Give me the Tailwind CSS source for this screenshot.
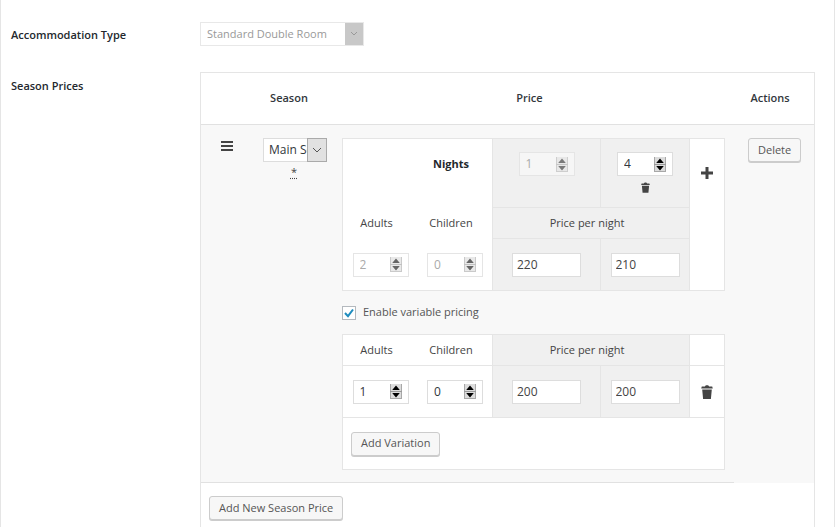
<!DOCTYPE html>
<html lang="en">
<head>
  <meta charset="UTF-8"/>
  <meta name="viewport" content="width=device-width, initial-scale=1.0"/>
  <title>Season Prices</title>
  <script src="https://cdn.jsdelivr.net/npm/@tailwindcss/browser@4"></script>
</head>
<body class="bg-white font-['Open_Sans',sans-serif] text-[11px] text-[#444]">

<!-- Shared icons -->
<svg class="hidden">
  <symbol id="spinner" viewBox="0 0 12 15">
    <rect width="12" height="15" fill="#dcdcdc"/>
    <path d="M.5 0v15M11.5 0v15M0 14.5h12" stroke="#a8a8a8" fill="none"/>
    <path d="M0 7.5h12" stroke="#999"/>
    <path d="M6 1.5l3.8 4.5h-7.6zM6 13.5l3.8-4.5h-7.6z" fill="currentColor"/>
  </symbol>
  <symbol id="trash" viewBox="0 0 12 14">
    <path d="M4 1.6C4 .7 5 .3 6 .3s2 .4 2 1.3h3.2l.6 2H.2l.6-2zM1.2 4.6h9.6L9.9 14H2.1z" fill="currentColor"/>
  </symbol>
</svg>

<div class="min-h-screen border-x border-[#e5e5e5] pl-[10px] pr-[19px] pt-[22px]">

  <!-- Accommodation Type -->
  <div class="flex">
    <label for="roomType" class="w-[189px] shrink-0 pt-[5px] font-semibold leading-4 text-[#23282d]">Accommodation Type</label>
    <div class="flex h-6 w-[164px] border border-[#e8e8e8]">
      <select id="roomType" disabled class="min-w-0 flex-1 appearance-none pl-1.5 text-[#999]">
        <option>Standard Double Room</option>
      </select>
      <span class="flex w-[18px] items-center justify-center bg-[#c8c8c8]">
        <svg class="h-2 w-2" viewBox="0 0 8 8"><path d="M1 2l3 3 3-3" fill="none" stroke="#999"/></svg>
      </span>
    </div>
  </div>

  <!-- Season Prices -->
  <div class="mt-[26px] flex">
    <h2 class="w-[189px] shrink-0 pt-1.5 font-semibold leading-4 text-[#23282d]">Season Prices</h2>

    <div class="min-w-0 flex-1 border-x border-t border-[#e5e5e5]">
      <table class="w-full table-fixed border-separate border-spacing-0">
        <colgroup>
          <col class="w-[52px]"/>
          <col class="w-[80px]"/>
          <col/>
          <col class="w-[80px]"/>
        </colgroup>
        <thead>
          <tr class="h-[52px]">
            <td class="border-b border-[#e1e1e1]"></td>
            <th class="border-b border-[#e1e1e1] pr-2 font-semibold text-[#32373c]">Season</th>
            <th class="border-b border-[#e1e1e1] pr-2 font-semibold text-[#32373c]">Price</th>
            <th class="border-b border-[#e1e1e1] pr-2 font-semibold text-[#32373c]">Actions</th>
          </tr>
        </thead>
        <tbody>
          <tr class="bg-[#f8f8f8] align-top">
            <td class="border-b border-[#e1e1e1] pt-[15px]">
              <button aria-label="Move" class="mx-auto block">
                <svg class="h-3 w-3" viewBox="0 0 12 12"><path d="M0 2h12M0 6h12M0 10h12" stroke="#444" stroke-width="2"/></svg>
              </button>
            </td>
            <td class="border-b border-[#e1e1e1] pl-[10px] pt-[13px]">
              <div class="flex h-6 w-16 border border-[#ddd] bg-white">
                <select id="season" aria-label="Season" class="min-w-0 flex-1 appearance-none pl-[5px] text-xs text-[#32373c]">
                  <option>Main Season</option>
                </select>
                <span class="-m-px flex w-5 items-center justify-center border border-[#aaa] bg-[#e1e1e1]">
                  <svg class="h-2 w-2" viewBox="0 0 8 8"><path d="M0 2l4 4 4-4" fill="none" stroke="#555"/></svg>
                </span>
              </div>
              <abbr title="required" class="block w-[62px] text-center leading-5 underline decoration-dotted underline-offset-2">*</abbr>
            </td>
            <td class="border-b border-[#e1e1e1] px-[9px] pb-3 pt-[13px]">

              <!-- Base prices -->
              <div class="border border-[#e5e5e5] bg-white">
                <table class="w-full table-fixed border-separate border-spacing-0">
                  <colgroup>
                    <col class="w-[75px]"/>
                    <col class="w-[74px]"/>
                    <col class="w-[108px]"/>
                    <col/>
                    <col class="w-[35px]"/>
                  </colgroup>
                  <tbody>
                    <tr class="h-[69px] align-top">
                      <td></td>
                      <th class="pr-2 pt-[17px] font-bold text-[#23282d]">Nights</th>
                      <td class="border-b border-l border-[#e5e5e5] bg-[#f0f0f0] pt-[13px]">
                        <div class="mx-auto flex h-6 w-14 items-center border border-[#e5e5e5] bg-[#f6f6f6] px-1.5">
                          <input type="number" value="1" disabled aria-label="Nights, period 1" class="min-w-0 flex-1 text-xs text-[#aaa] [&::-webkit-inner-spin-button]:appearance-none"/>
                          <svg class="h-[15px] w-3 text-black opacity-50"><use href="#spinner"/></svg>
                        </div>
                      </td>
                      <td class="border-b border-l border-[#e5e5e5] bg-[#f0f0f0] pt-[13px]">
                        <div class="mx-auto flex h-6 w-14 items-center border border-[#ddd] bg-white px-1.5">
                          <input type="number" value="4" aria-label="Nights, period 2" class="min-w-0 flex-1 text-xs text-[#32373c] [&::-webkit-inner-spin-button]:appearance-none"/>
                          <svg class="h-[15px] w-3 text-black"><use href="#spinner"/></svg>
                        </div>
                        <button aria-label="Remove period" class="mx-auto mt-1.5 block">
                          <svg class="h-[11px] w-[9px] text-[#444]"><use href="#trash"/></svg>
                        </button>
                      </td>
                      <td rowspan="3" class="border-l border-[#e5e5e5] pt-7">
                        <button aria-label="Add period" class="mx-auto block">
                          <svg class="h-3 w-3" viewBox="0 0 12 12"><path d="M6 0v12M0 6h12" stroke="#444" stroke-width="3"/></svg>
                        </button>
                      </td>
                    </tr>
                    <tr class="h-[31px]">
                      <th class="pr-2 font-normal">Adults</th>
                      <th class="pr-2 font-normal">Children</th>
                      <th colspan="2" class="border-b border-l border-[#e5e5e5] bg-[#f0f0f0] pr-2 font-normal">Price per night</th>
                    </tr>
                    <tr class="h-[51px]">
                      <td>
                        <div class="mx-auto flex h-6 w-14 items-center border border-[#e5e5e5] bg-white px-1.5">
                          <input type="number" value="2" disabled aria-label="Adults" class="min-w-0 flex-1 text-xs text-[#aaa] [&::-webkit-inner-spin-button]:appearance-none"/>
                          <svg class="h-[15px] w-3 text-black opacity-60"><use href="#spinner"/></svg>
                        </div>
                      </td>
                      <td>
                        <div class="mx-auto flex h-6 w-14 items-center border border-[#e5e5e5] bg-white px-1.5">
                          <input type="number" value="0" disabled aria-label="Children" class="min-w-0 flex-1 text-xs text-[#aaa] [&::-webkit-inner-spin-button]:appearance-none"/>
                          <svg class="h-[15px] w-3 text-black opacity-60"><use href="#spinner"/></svg>
                        </div>
                      </td>
                      <td class="border-l border-[#e5e5e5] bg-[#f0f0f0]">
                        <input type="text" value="220" aria-label="Price, period 1" class="mx-auto block h-6 w-[69px] border border-[#ddd] bg-white px-1 text-xs"/>
                      </td>
                      <td class="border-l border-[#e5e5e5] bg-[#f0f0f0]">
                        <input type="text" value="210" aria-label="Price, period 2" class="mx-auto block h-6 w-[69px] border border-[#ddd] bg-white px-1 text-xs"/>
                      </td>
                    </tr>
                  </tbody>
                </table>
              </div>

              <div class="flex h-[43px] items-center">
                <div class="grid">
                  <input id="variable" type="checkbox" checked class="col-start-1 row-start-1 h-[14px] w-[14px] appearance-none border border-[#b4b9be] bg-white"/>
                  <svg class="pointer-events-none col-start-1 row-start-1 h-[14px] w-[14px]" viewBox="0 0 14 14"><path d="M3 7l3 3.2L11 3.5" fill="none" stroke="#1e8cbe" stroke-width="2"/></svg>
                </div>
                <label for="variable" class="pl-[7px] text-[#555]">Enable variable pricing</label>
              </div>

              <!-- Variations -->
              <div class="border border-[#e5e5e5] bg-white">
                <table class="w-full table-fixed border-separate border-spacing-0">
                  <colgroup>
                    <col class="w-[75px]"/>
                    <col class="w-[74px]"/>
                    <col class="w-[108px]"/>
                    <col/>
                    <col class="w-[35px]"/>
                  </colgroup>
                  <thead>
                    <tr class="h-[31px]">
                      <th class="border-b border-[#e5e5e5] pr-2 font-normal">Adults</th>
                      <th class="border-b border-[#e5e5e5] pr-2 font-normal">Children</th>
                      <th colspan="2" class="border-b border-l border-[#e5e5e5] bg-[#f0f0f0] pr-2 font-normal">Price per night</th>
                      <td class="border-b border-l border-[#e5e5e5]"></td>
                    </tr>
                  </thead>
                  <tbody>
                    <tr class="h-[52px]">
                      <td class="border-b border-[#e5e5e5]">
                        <div class="mx-auto flex h-6 w-14 items-center border border-[#ddd] bg-white px-1.5">
                          <input type="number" value="1" aria-label="Adults, variation 1" class="min-w-0 flex-1 text-xs text-[#32373c] [&::-webkit-inner-spin-button]:appearance-none"/>
                          <svg class="h-[15px] w-3 text-black"><use href="#spinner"/></svg>
                        </div>
                      </td>
                      <td class="border-b border-[#e5e5e5]">
                        <div class="mx-auto flex h-6 w-14 items-center border border-[#ddd] bg-white px-1.5">
                          <input type="number" value="0" aria-label="Children, variation 1" class="min-w-0 flex-1 text-xs text-[#32373c] [&::-webkit-inner-spin-button]:appearance-none"/>
                          <svg class="h-[15px] w-3 text-black"><use href="#spinner"/></svg>
                        </div>
                      </td>
                      <td class="border-b border-l border-[#e5e5e5] bg-[#f0f0f0]">
                        <input type="text" value="200" aria-label="Variation price, period 1" class="mx-auto block h-6 w-[69px] border border-[#ddd] bg-white px-1 text-xs"/>
                      </td>
                      <td class="border-b border-l border-[#e5e5e5] bg-[#f0f0f0]">
                        <input type="text" value="200" aria-label="Variation price, period 2" class="mx-auto block h-6 w-[69px] border border-[#ddd] bg-white px-1 text-xs"/>
                      </td>
                      <td class="border-b border-l border-[#e5e5e5]">
                        <button aria-label="Remove variation" class="mx-auto block">
                          <svg class="h-[14px] w-3 text-[#444]"><use href="#trash"/></svg>
                        </button>
                      </td>
                    </tr>
                    <tr class="h-[51px]">
                      <td colspan="5" class="pl-2">
                        <button class="block h-6 rounded-[3px] border border-[#ccc] bg-[#f7f7f7] px-[9px] text-[#555] shadow-[0_1px_0_#ccc]">Add Variation</button>
                      </td>
                    </tr>
                  </tbody>
                </table>
              </div>
            </td>
            <td class="pl-[14px] pt-[13px]">
              <button class="block h-6 rounded-[3px] border border-[#ccc] bg-[#f7f7f7] px-[9px] text-[#555] shadow-[0_1px_0_#ccc]">Delete</button>
            </td>
          </tr>
        </tbody>
        <tfoot>
          <tr class="h-[44px] align-top">
            <td colspan="4" class="pl-2 pt-[13px]">
              <button class="block h-6 rounded-[3px] border border-[#ccc] bg-[#f7f7f7] px-[9px] text-[#555] shadow-[0_1px_0_#ccc]">Add New Season Price</button>
            </td>
          </tr>
        </tfoot>
      </table>
    </div>
  </div>

</div>

</body>
</html>
